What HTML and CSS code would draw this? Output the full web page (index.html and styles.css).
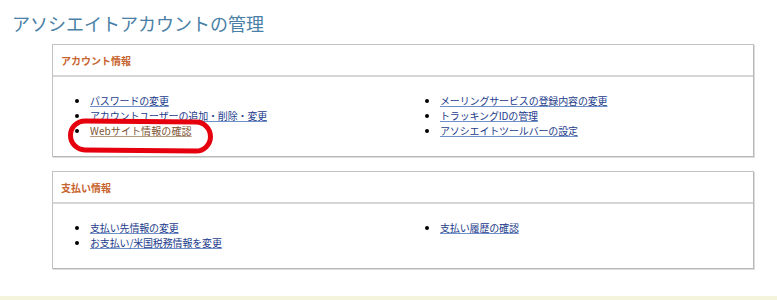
FILE: index.html
```html
<!DOCTYPE html>
<html lang="ja">
<head>
<meta charset="utf-8">
<title>アソシエイトアカウントの管理</title>
<link rel="stylesheet" href="styles.css">
</head>
<body>
<div class="page">
  <h1 class="title">アソシエイトアカウントの管理</h1>
  <div class="box">
    <div class="box-head">アカウント情報</div>
    <div class="box-body">
      <ul class="links">
        <li><a href="#">パスワードの変更</a></li>
        <li><a href="#">アカウントユーザーの追加・削除・変更</a></li>
        <li class="marked"><a href="#" class="visited">Webサイト情報の確認</a><span class="circle"></span></li>
      </ul>
      <ul class="links">
        <li><a href="#">メーリングサービスの登録内容の変更</a></li>
        <li><a href="#">トラッキングIDの管理</a></li>
        <li><a href="#">アソシエイトツールバーの設定</a></li>
      </ul>
    </div>
  </div>
  <div class="box">
    <div class="box-head">支払い情報</div>
    <div class="box-body">
      <ul class="links">
        <li><a href="#">支払い先情報の変更</a></li>
        <li><a href="#">お支払い/米国税務情報を変更</a></li>
      </ul>
      <ul class="links">
        <li><a href="#">支払い履歴の確認</a></li>
      </ul>
    </div>
  </div>
</div>
<div class="footer-strip"></div>
</body>
</html>
```
FILE: styles.css
```css
html, body {
  margin: 0;
  padding: 0;
  background: #ffffff;
}
body {
  font-family: "Noto Sans CJK JP", "Noto Sans", sans-serif;
  height: 300px;
  display: flex;
  flex-direction: column;
  overflow: hidden;
}
.page {
  flex: 1;
  padding: 11px 0 0 0;
}
.title {
  margin: 0 0 8px 12px;
  font-size: 18px;
  font-weight: normal;
  line-height: 25px;
  color: #4a7fa6;
  letter-spacing: 0;
}
.box {
  margin: 0 0 14px 52px;
  width: 702px;
  box-sizing: border-box;
  border: 1px solid #c2c2c2;
  border-right-color: #b8b8b8;
  border-bottom-color: #b8b8b8;
  box-shadow: 1px 1px 0 #dcdcdc;
}
.box-head {
  height: 30px;
  display: flex;
  align-items: center;
  padding-left: 8px;
  font-size: 10px;
  font-weight: bold;
  color: #c8642e;
  border-bottom: 2px solid #d6d6d6;
}
.box-body {
  display: grid;
  grid-template-columns: 1fr 1fr;
  padding: 16px 0 18px 0;
}
.links {
  margin: 0;
  padding-left: 37px;
  font-size: 10px;
  line-height: 15px;
  list-style: disc;
  letter-spacing: -0.15px;
}
.links li {
  position: relative;
}
.links a {
  color: #1d3c8c;
  text-decoration: underline;
  text-decoration-color: #6f8fc8;
}
.links a.visited {
  color: #7d5434;
  text-decoration-color: #b89a80;
  letter-spacing: 0.1px;
}
.circle {
  position: absolute;
  left: -22px;
  top: -4px;
  width: 145px;
  height: 34px;
  box-sizing: border-box;
  border: 5px solid #e6000e;
  border-radius: 17px;
  transform: rotate(0.6deg);
  pointer-events: none;
}
.footer-strip {
  height: 4px;
  background: #f4f4dc;
}
```
